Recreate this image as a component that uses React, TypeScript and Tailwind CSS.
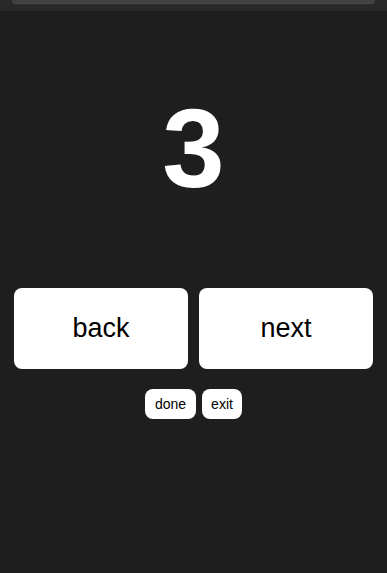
import React, { useState } from 'react';

const App: React.FC = () => {
  const [count, setCount] = useState(3);

  return (
    <div
      className="min-h-screen w-full bg-[#1e1e1e] flex flex-col"
      style={{ fontFamily: '"Liberation Sans", Arial, Helvetica, sans-serif' }}
    >
      {/* header strip, mostly scrolled off */}
      <div className="h-[11px] bg-[#292929] px-[12px]">
        <div className="h-[4px] rounded-b-[8px] bg-[#404040] border-b border-[#4a4a4a]"></div>
      </div>

      {/* counter */}
      <div className="mt-[82px] text-center text-white font-bold text-[112px] leading-none">
        {count}
      </div>

      {/* big controls */}
      <div className="mt-[83px] px-[14px] grid grid-cols-2 gap-[11px]">
        <button
          className="h-[81px] rounded-[8px] bg-white text-black text-[27px]"
          onClick={() => setCount((c) => c - 1)}
        >
          back
        </button>
        <button
          className="h-[81px] rounded-[8px] bg-white text-black text-[27px]"
          onClick={() => setCount((c) => c + 1)}
        >
          next
        </button>
      </div>

      {/* small controls */}
      <div className="mt-[20px] flex justify-center gap-[6px]">
        <button className="h-[30px] w-[51px] rounded-[8px] bg-white text-black text-[14px]">
          done
        </button>
        <button className="h-[30px] w-[40px] rounded-[8px] bg-white text-black text-[14px]">
          exit
        </button>
      </div>
    </div>
  );
};

export default App;
